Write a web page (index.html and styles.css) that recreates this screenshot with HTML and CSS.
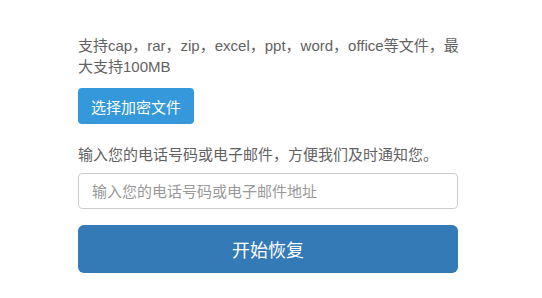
FILE: index.html
```html
<!DOCTYPE html>
<html lang="zh-CN">
  <head>
    <meta charset="UTF-8" />
    <meta name="viewport" content="width=device-width, initial-scale=1.0" />
    <title>恢复文件</title>
    <link rel="stylesheet" href="styles.css">
  </head>
  <body>
    <main class="container">
      <p class="tip">支持cap，rar，zip，excel，ppt，word，office等文件，最大支持100MB</p>
      <button type="button" class="btn__file">选择加密文件</button>
      <p class="tip tip--contact">输入您的电话号码或电子邮件，方便我们及时通知您。</p>
      <input type="text" class="contact" placeholder="输入您的电话号码或电子邮件地址" />
      <button type="submit" class="btn__start">开始恢复</button>
    </main>
  </body>
</html>
```

FILE: styles.css
```css
body {
  margin: 0;
  font-family: "Liberation Sans", "Noto Sans CJK SC", sans-serif;
  background-color: #fff;
}
.container {
  display: flex;
  flex-direction: column;
  align-items: flex-start;
  width: 380px;
  padding: 35px 0 0 78px;
}
.tip {
  margin: 0;
  width: 384px;
  font-size: 15px;
  line-height: 21px;
  color: #626262;
}
.tip--contact {
  margin-top: 20px;
}
.btn__file {
  margin-top: 11px;
  height: 36px;
  padding: 0 13px;
  border: none;
  border-radius: 4px;
  background-color: #3498db;
  color: white;
  font-family: inherit;
  font-size: 15px;
  cursor: pointer;
}
.contact {
  box-sizing: border-box;
  margin-top: 8px;
  width: 100%;
  height: 36px;
  padding: 0 13px;
  border: 1px solid #ccc;
  border-radius: 4px;
  font-family: inherit;
  font-size: 15px;
  color: #555;
}
.contact::placeholder {
  color: #999;
}
.btn__start {
  margin-top: 16px;
  width: 100%;
  height: 48px;
  border: none;
  border-radius: 6px;
  background-color: #337ab7;
  color: white;
  font-family: inherit;
  font-size: 18px;
  cursor: pointer;
}
```
